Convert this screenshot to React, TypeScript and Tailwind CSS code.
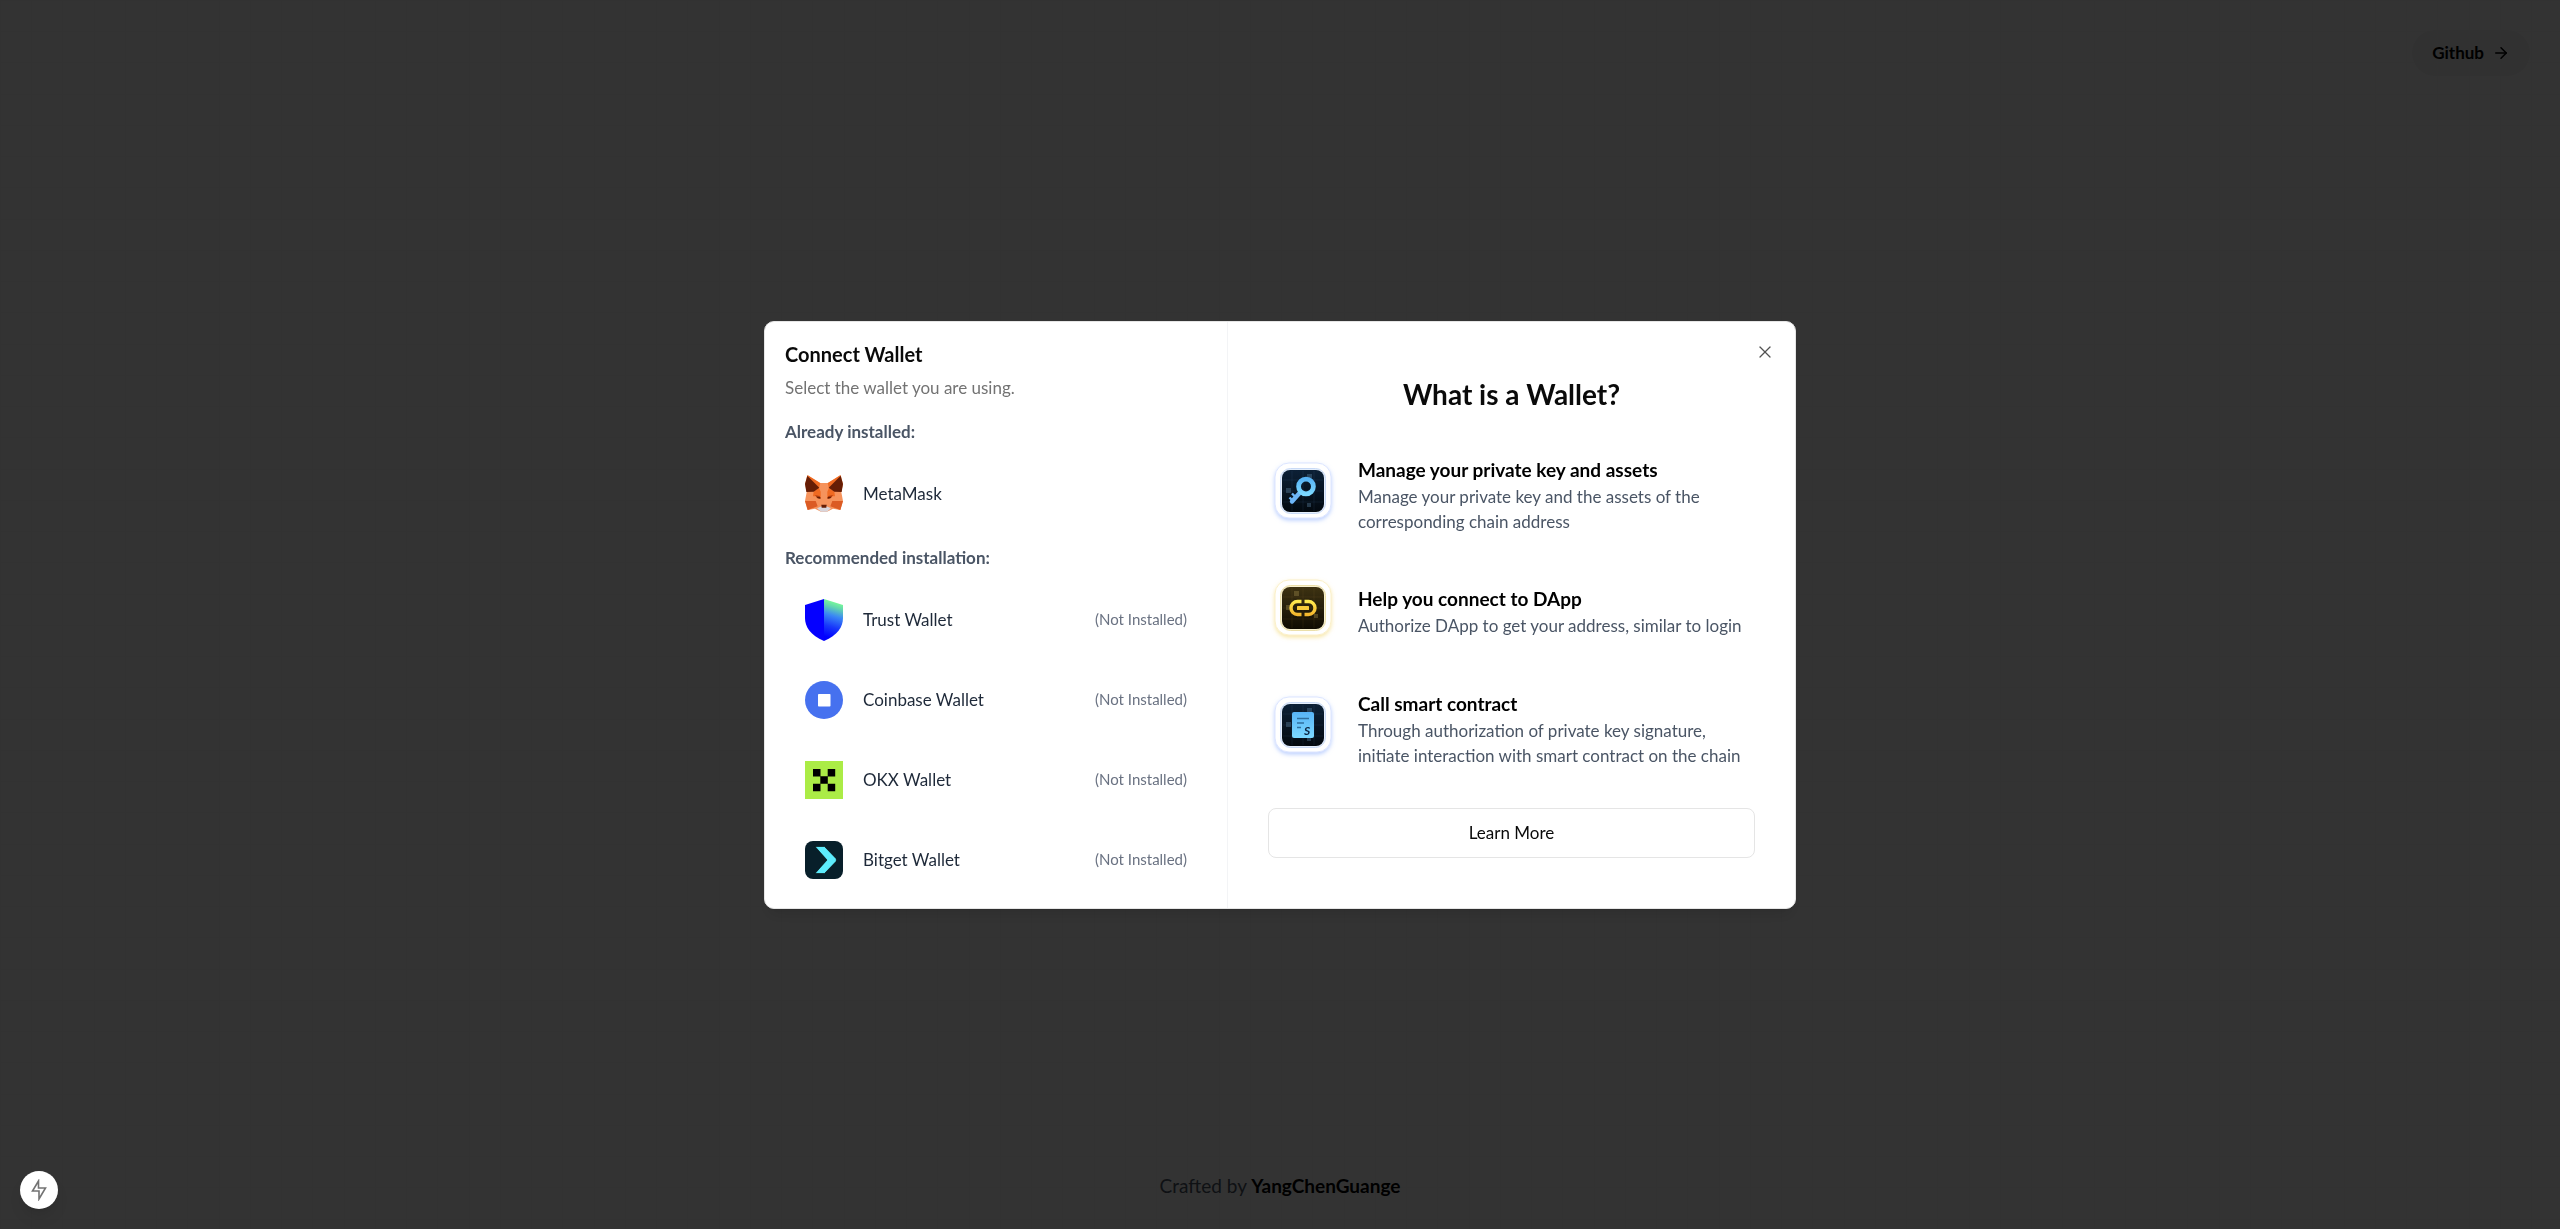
import React from "react";
import { ArrowRight, X } from "lucide-react";

function MetaMaskIcon() {
  return (
    <svg viewBox="0 0 114 110" className="w-full" aria-hidden="true">
      <path d="M7 0 44 24H70L107 0 114 27 109 52 114 78 106 105 84 101 66 110H48L30 101 8 105 0 78 5 52 0 27Z" fill="#F6935C" />
      <path d="M7 0 46 24 42 40 30 40Z" fill="#F06A22" />
      <path d="M107 0 68 24 72 40 84 40Z" fill="#F06A22" />
      <path d="M42 38 47 50 47 70 40 64 24 64 26 50Z" fill="#F06A22" />
      <path d="M72 38 67 50 67 70 74 64 90 64 88 50Z" fill="#F06A22" />
      <path d="M7 2 43 38 26 50 4 51 0 27Z" fill="#661D05" />
      <path d="M107 2 71 38 88 50 110 51 114 27Z" fill="#661D05" />
      <path d="M0 78H32L38 94 8 105Z" fill="#DB5B24" />
      <path d="M114 78H82L76 94 106 105Z" fill="#DB5B24" />
      <path d="M30 60 44 63 47 71 36 69Z" fill="#B8400F" />
      <path d="M84 60 70 63 67 71 78 69Z" fill="#B8400F" />
      <path d="M35 65 46 66 46 71 38 70Z" fill="#661D05" />
      <path d="M79 65 68 66 68 71 76 70Z" fill="#661D05" />
      <path d="M36 100 50 94H64L78 100 66 110H48Z" fill="#D9D5DB" />
      <path d="M49 89H65L64 98H50Z" fill="#661D05" />
    </svg>
  );
}

function TrustIcon() {
  return (
    <svg viewBox="0 0 38 42" className="w-full" aria-hidden="true">
      <defs>
        <linearGradient id="trust" x1="33" y1="3" x2="22" y2="38" gradientUnits="userSpaceOnUse">
          <stop offset="0" stopColor="#7DFF94" />
          <stop offset=".16" stopColor="#63D8AE" />
          <stop offset=".4" stopColor="#3A87F5" />
          <stop offset=".7" stopColor="#1838FB" />
          <stop offset="1" stopColor="#0000FF" />
        </linearGradient>
      </defs>
      <path d="M0 6 19 0V42C5.500 36 0 28 0 19Z" fill="#0500FF" />
      <path d="M38 6 19 0V42C32.500 36 38 28 38 19Z" fill="url(#trust)" />
    </svg>
  );
}

function CoinbaseIcon() {
  return (
    <svg viewBox="0 0 38 38" className="w-full" aria-hidden="true">
      <circle cx="19" cy="19" r="19" fill="#4671EF" />
      <rect x="13" y="13" width="12.500" height="12.500" rx=".8" fill="#fff" />
    </svg>
  );
}

function OkxIcon() {
  return (
    <svg viewBox="0 0 38 38" className="w-full" aria-hidden="true">
      <path d="M0 0H38V38H0Z" fill="#ABEC46" />
      <path d="M8 8h7.500v7.500H8zM22.700 8h7.500v7.500h-7.500zM15.300 15.300h7.500v7.500h-7.500zM8 22.700h7.500v7.500H8zM22.700 22.700h7.500v7.500h-7.500z" fill="#000" />
    </svg>
  );
}

function BitgetIcon() {
  return (
    <svg viewBox="0 0 38 38" className="w-full" aria-hidden="true">
      <rect width="38" height="38" rx="8" fill="#081F2A" />
      <path d="M10 5.500H19.500L31 17.500Q32 19 31 20.500L19.500 32.500H10L22 19Z" fill="#5DEBFC" stroke="#000" strokeWidth=".6" />
    </svg>
  );
}

type Tone = "blue" | "gold";

function Tile({ id, tone, children }: { id: string; tone: Tone; children: React.ReactNode }) {
  const blue = tone === "blue";
  return (
    <svg viewBox="0 0 70 78" className="h-[78px] w-[70px] shrink-0" aria-hidden="true">
      <defs>
        <linearGradient id={`${id}-bg`} x1="0" y1="0" x2="0" y2="1">
          <stop offset="0" stopColor={blue ? "#0C2036" : "#3D3212"} />
          <stop offset="1" stopColor={blue ? "#03090F" : "#0F0B02"} />
        </linearGradient>
        <linearGradient id={`${id}-fg`} x1="0" y1="0" x2="0" y2="1">
          <stop offset="0" stopColor={blue ? "#58B4F6" : "#FFE94E"} />
          <stop offset="1" stopColor={blue ? "#7BD8FF" : "#F5B82E"} />
        </linearGradient>
        <filter id={`${id}-sh`} x="-30%" y="-30%" width="160%" height="170%">
          <feDropShadow dx="0" dy="2" stdDeviation="2" floodColor={blue ? "#8FB0FF" : "#F3D66B"} floodOpacity=".6" />
        </filter>
      </defs>
      <rect x="7" y="7" width="56" height="55" rx="14" fill="#fff" stroke={blue ? "#DCE5FF" : "#FBF0C9"} filter={`url(#${id}-sh)`} />
      <rect x="12.500" y="12.500" width="45" height="45" rx="10" fill={blue ? "#E4EEFC" : "#F8F0CF"} stroke={blue ? "#C9DAF6" : "#EBDFA9"} />
      <rect x="14" y="14" width="42" height="42" rx="8" fill={`url(#${id}-bg)`} />
      <path d="M24 15V55M35 15V55M46 15V55M15 24H55M15 35H55M15 46H55" stroke={blue ? "#5B8BB5" : "#A58B3C"} strokeOpacity=".16" strokeWidth=".7" />
      <g fill={blue ? "#5B7F9E" : "#9B8748"} fillOpacity=".4">
        <rect x={blue ? 39 : 26} y="18" width="5" height="5" />
        <rect x="18" y="32" width="5" height="5" />
        <rect x={blue ? 39 : 46} y={blue ? 47 : 41} width="4" height="4" />
      </g>
      {children}
    </svg>
  );
}

function KeyTile() {
  return (
    <Tile id="key" tone="blue">
      <path d="M32 36.500 24 45.500" stroke="#6EB6F8" strokeWidth="4.400" strokeLinecap="round" />
      <path d="M28 41.500 24 37.500M25 45 21.500 41.500" stroke="#6EB6F8" strokeWidth="2.400" />
      <circle cx="38" cy="30.500" r="7.400" fill="none" stroke="url(#key-fg)" strokeWidth="4.800" />
    </Tile>
  );
}

function LinkTile() {
  return (
    <Tile id="link" tone="gold">
      <path d="M33.500 28.500H29.500A6.500 6.500 0 0 0 29.500 41.500H33.500M36.500 28.500H40.500A6.500 6.500 0 0 1 40.500 41.500H36.500" fill="none" stroke="url(#link-fg)" strokeWidth="3.400" />
      <rect x="29" y="33" width="12" height="4" rx=".5" fill="#F9CB3A" />
    </Tile>
  );
}

function ContractTile() {
  return (
    <Tile id="contract" tone="blue">
      <rect x="24" y="22" width="22" height="26" rx="2" fill="url(#contract-fg)" />
      <path d="M29 28.500H41M29 33H36M29 37.500H33" stroke="#2F6F9F" strokeWidth="1.300" />
      <text x="36" y="45" fontSize="12" fontWeight="700" fontStyle="italic" fill="#0B2440">S</text>
    </Tile>
  );
}

const recommended = [
  { name: "Trust Wallet", icon: <TrustIcon /> },
  { name: "Coinbase Wallet", icon: <CoinbaseIcon /> },
  { name: "OKX Wallet", icon: <OkxIcon /> },
  { name: "Bitget Wallet", icon: <BitgetIcon /> },
];

const features = [
  {
    title: "Manage your private key and assets",
    text: "Manage your private key and the assets of the corresponding chain address",
    tile: <KeyTile />,
  },
  {
    title: "Help you connect to DApp",
    text: "Authorize DApp to get your address, similar to login",
    tile: <LinkTile />,
  },
  {
    title: "Call smart contract",
    text: "Through authorization of private key signature, initiate interaction with smart contract on the chain",
    tile: <ContractTile />,
  },
];

function WalletRow({ name, icon, installed }: { name: string; icon: React.ReactNode; installed?: boolean }) {
  return (
    <li>
      <button type="button" className="flex h-20 w-full items-center gap-5 px-5 text-left">
        <span className="w-[38px]">{icon}</span>
        <span className="flex-1 text-[17px] text-gray-800">{name}</span>
        {!installed && <span className="text-[15px] text-gray-500">(Not Installed)</span>}
      </button>
    </li>
  );
}

export default function App() {
  return (
    <div className="min-h-screen font-['Lato',sans-serif] text-[#0a0a0a]">
      <div className="flex min-h-screen flex-col justify-between bg-[linear-gradient(to_right,#fafafa_1px,transparent_1px_31px,#fafafa_31px_32px,transparent_32px_62px,#fafafa_62px_63px,transparent_63px_94px,#fafafa_94px_95px,transparent_95px),linear-gradient(to_bottom,#fafafa_1px,transparent_1px_31px,#fafafa_31px_32px,transparent_32px_62px,#fafafa_62px_63px,transparent_63px_94px,#fafafa_94px_95px,transparent_95px)] bg-[size:125px_125px]">
        <header className="flex justify-end px-[30px] pt-[30px]">
          <a href="#github" className="flex h-[46px] items-center gap-2 rounded-full bg-[#f4f4f5] px-5 text-[17px] font-bold text-black">
            Github
            <ArrowRight size={18} />
          </a>
        </header>
        <footer className="pb-[30px] text-center text-[19px] leading-[26px] text-gray-600">
          Crafted by <span className="font-bold text-black">YangChenGuange</span>
        </footer>
      </div>

      <div className="fixed inset-0 flex items-center justify-center bg-black/80">
        <div
          role="dialog"
          aria-labelledby="dialog-title"
          className="relative flex w-full max-w-[1032px] rounded-[10px] border border-neutral-200 bg-white shadow-lg"
        >
          <section className="w-[463px] border-r border-gray-100 px-5 pt-5 pb-2">
            <h2 id="dialog-title" className="text-[20px] leading-6 font-bold">Connect Wallet</h2>
            <p className="mt-2 text-[17px] leading-7 text-neutral-500">Select the wallet you are using.</p>
            <h3 className="mt-4 text-[17px] leading-7 font-bold text-gray-600">Already installed:</h3>
            <ul className="mt-2">
              <WalletRow name="MetaMask" icon={<MetaMaskIcon />} installed />
            </ul>
            <h3 className="mt-[10px] text-[17px] leading-7 font-bold text-gray-600">Recommended installation:</h3>
            <ul className="mt-2">
              {recommended.map((w) => (
                <WalletRow key={w.name} name={w.name} icon={w.icon} />
              ))}
            </ul>
          </section>

          <section className="flex-1 px-10 pt-[52px] pb-10">
            <h2 className="text-center text-[28px] leading-10 font-bold">What is a Wallet?</h2>
            <ul className="mt-[42px] flex flex-col gap-[39px]">
              {features.map((f) => (
                <li key={f.title} className="flex items-center gap-5">
                  {f.tile}
                  <div>
                    <h3 className="text-[19px] leading-7 font-bold text-black">{f.title}</h3>
                    <p className="text-[17px] leading-[25px] text-gray-600">{f.text}</p>
                  </div>
                </li>
              ))}
            </ul>
            <button type="button" className="mt-10 h-[50px] w-full rounded-lg border border-neutral-200 text-[17px]">
              Learn More
            </button>
          </section>

          <button type="button" aria-label="Close" className="absolute top-5 right-5 text-neutral-600">
            <X size={20} strokeWidth={1.5} />
          </button>
        </div>
      </div>

      <button
        type="button"
        aria-label="Developer tools"
        className="fixed bottom-5 left-5 flex size-[38px] items-center justify-center rounded-full bg-white text-neutral-500 shadow-lg"
      >
        <svg width="16" height="22" viewBox="0 0 16 22" fill="none" stroke="currentColor" strokeWidth="1.600" aria-hidden="true">
          <path d="M7.500 2 1.500 12H8V20L14.500 9H7.500Z" />
        </svg>
      </button>
    </div>
  );
}
